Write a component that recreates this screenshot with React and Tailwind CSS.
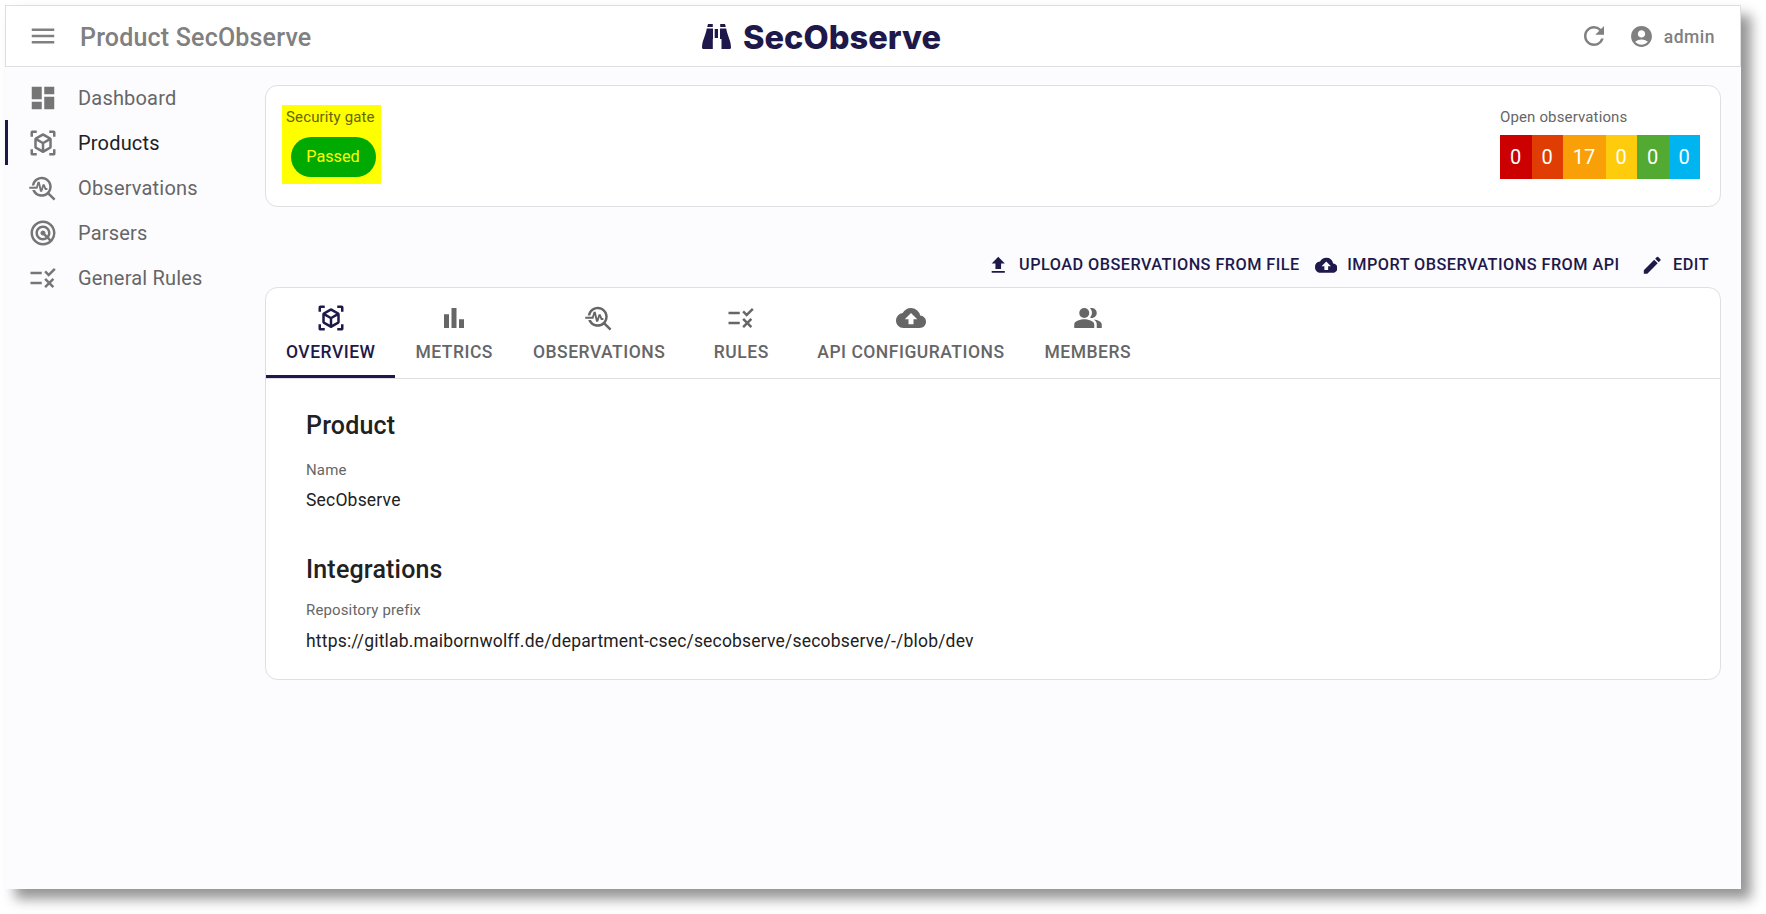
import React from "react";
import {
  MdMenu, MdRefresh, MdAccountCircle, MdDashboard, MdViewInAr, MdTroubleshoot,
  MdRadar, MdRule, MdBarChart, MdBackup, MdPeopleAlt, MdUpload, MdEdit,
} from "react-icons/md";

const nav = [
  { label: "Dashboard", icon: MdDashboard },
  { label: "Products", icon: MdViewInAr, active: true },
  { label: "Observations", icon: MdTroubleshoot },
  { label: "Parsers", icon: MdRadar },
  { label: "General Rules", icon: MdRule },
];

const tabs = [
  { label: "OVERVIEW", icon: MdViewInAr, active: true },
  { label: "METRICS", icon: MdBarChart },
  { label: "OBSERVATIONS", icon: MdTroubleshoot },
  { label: "RULES", icon: MdRule },
  { label: "API CONFIGURATIONS", icon: MdBackup },
  { label: "MEMBERS", icon: MdPeopleAlt },
];

const severities = [
  ["0", "w-8 bg-[#cc0000]"],
  ["0", "w-[31px] bg-[#df3d03]"],
  ["17", "w-[43px] bg-[#f9a009]"],
  ["0", "w-[31px] bg-[#ffcb0d]"],
  ["0", "w-8 bg-[#53aa33]"],
  ["0", "w-[31px] bg-[#00b4f0]"],
];

function Logo() {
  return (
    <div className="flex items-center text-[#1e194a]">
      <svg width="29" height="25" viewBox="0 0 29 25" fill="currentColor">
        <path d="M6 0h4.800v3H5.200zM18.200 0H23l.8 3h-5.600zM4.800 4.500H11V15h-.2v10H1.500Q0 25 0 23.500C0 17 3.500 12 4.800 4.500zM12.700 5H16v9h-3.300zM18 4.500h6.200C25.500 12 29 17 29 23.500q0 1.500-1.500 1.500H19.500V15H18z" />
      </svg>
      <svg width="200" height="34" className="ml-3 overflow-visible">
        <text x="0" y="30" textLength="198" lengthAdjust="spacingAndGlyphs" fill="currentColor" className="font-[Inter] text-[33px] font-extrabold">SecObserve</text>
      </svg>
    </div>
  );
}

function Action({ icon: Icon, children, className }) {
  return (
    <button className={"flex items-center gap-2.5 text-[16.25px] font-medium tracking-[0.02857em] " + className}>
      <Icon size={22.5} />
      {children}
    </button>
  );
}

export default function App() {
  return (
    <div className="h-[914px] w-[1766px] overflow-hidden bg-white pt-[5px] pl-[5px] font-[Roboto,sans-serif] text-[#212121]">
      <div className="flex h-[884px] w-[1736px] flex-col bg-[#fcfcfe] shadow-[10px_10px_12px_rgba(0,0,0,0.42)]">
        <header className="flex h-[62px] shrink-0 items-center border border-[#dfdfe3] bg-white text-[#808080]">
          <div className="flex w-[690px] items-center pl-[22px]">
            <MdMenu size={30} />
            <h1 className="ml-[22px] pt-[3px] text-[25px] leading-8 font-medium tracking-[0.0075em]">Product SecObserve</h1>
          </div>
          <div className="ml-[6px]"><Logo /></div>
          <div className="ml-auto flex items-center pr-[25px]">
            <MdRefresh size={30} />
            <MdAccountCircle size={25} className="ml-5" />
            <span className="ml-2.5 pt-[2px] text-[17.5px] font-medium tracking-[0.02857em]">admin</span>
          </div>
        </header>
        <div className="flex">
          <nav className="w-[260px] shrink-0 pt-2">
            {nav.map(({ label, icon: Icon, active }) => (
              <a key={label} className={"flex h-[45px] items-center border-l-[3px] pl-5 text-[20px] tracking-[0.00938em] " + (active ? "border-[#1e194a] text-[#212121]" : "border-transparent text-[#666668]")}>
                <Icon size={30} className="text-[#757575]" />
                <span className="ml-5">{label}</span>
              </a>
            ))}
          </nav>
          <main className="w-[1456px] pt-[18px]">
            <section className="flex h-[122px] justify-between rounded-[12.5px] border border-[#dfdfe3] bg-white pt-[19px] pr-5 pl-4">
              <div className="h-[79px] w-[99px] bg-[#ffff00] pt-[2px] pl-1">
                <div className="text-[15px] leading-5 tracking-[0.00938em] text-[#666600]">Security gate</div>
                <div className="mt-2.5 ml-[5px] flex h-10 w-[85px] items-center justify-center rounded-full bg-[#00aa00] pr-px text-[16.25px] text-[#ffff00]">Passed</div>
              </div>
              <div className="w-[200px] pt-[2px]">
                <div className="text-[15px] leading-5 tracking-[0.00938em] text-[#666666]">Open observations</div>
                <div className="mt-2 flex h-11 text-[20px] text-white">
                  {severities.map(([n, c], i) => (
                    <div key={i} className={"flex items-center justify-center pr-px " + c}>{n}</div>
                  ))}
                </div>
              </div>
            </section>
            <div className="flex h-20 items-center justify-end pt-9 pr-3 text-[#1e194a]">
              <Action icon={MdUpload} className="mr-[15px]">UPLOAD OBSERVATIONS FROM FILE</Action>
              <Action icon={MdBackup} className="mr-[21px]">IMPORT OBSERVATIONS FROM API</Action>
              <Action icon={MdEdit} className="">EDIT</Action>
            </div>
            <section className="h-[393px] rounded-[12.5px] border border-[#dfdfe3] bg-white">
              <div className="flex h-[91px] border-b border-[#dfdfe3]">
                {tabs.map(({ label, icon: Icon, active }) => (
                  <div key={label} className={"flex h-[90px] min-w-[112px] flex-col items-center border-b-[3px] px-5 pt-[15px] text-[17.5px] font-medium tracking-[0.02857em] " + (active ? "border-[#1e194a] text-[#1e194a]" : "border-transparent text-[#666666]")}>
                    <Icon size={30} />
                    <span className="mt-2 leading-[22px]">{label}</span>
                  </div>
                ))}
              </div>
              <div className="pl-10">
                <h2 className="pt-[31px] text-[25px] leading-8 font-medium tracking-[0.0075em]">Product</h2>
                <div className="mt-[18px] text-[15px] leading-5 tracking-[0.00938em] text-[#666666]">Name</div>
                <div className="mt-2 text-[17.5px] leading-6 tracking-[0.01071em]">SecObserve</div>
                <h2 className="mt-[42px] text-[25px] leading-8 font-medium tracking-[0.0075em]">Integrations</h2>
                <div className="mt-3.5 text-[15px] leading-5 tracking-[0.00938em] text-[#666666]">Repository prefix</div>
                <div className="mt-[9px] text-[17.5px] leading-6 tracking-[0.01071em]">https://gitlab.maibornwolff.de/department-csec/secobserve/secobserve/-/blob/dev</div>
              </div>
            </section>
          </main>
        </div>
      </div>
    </div>
  );
}
